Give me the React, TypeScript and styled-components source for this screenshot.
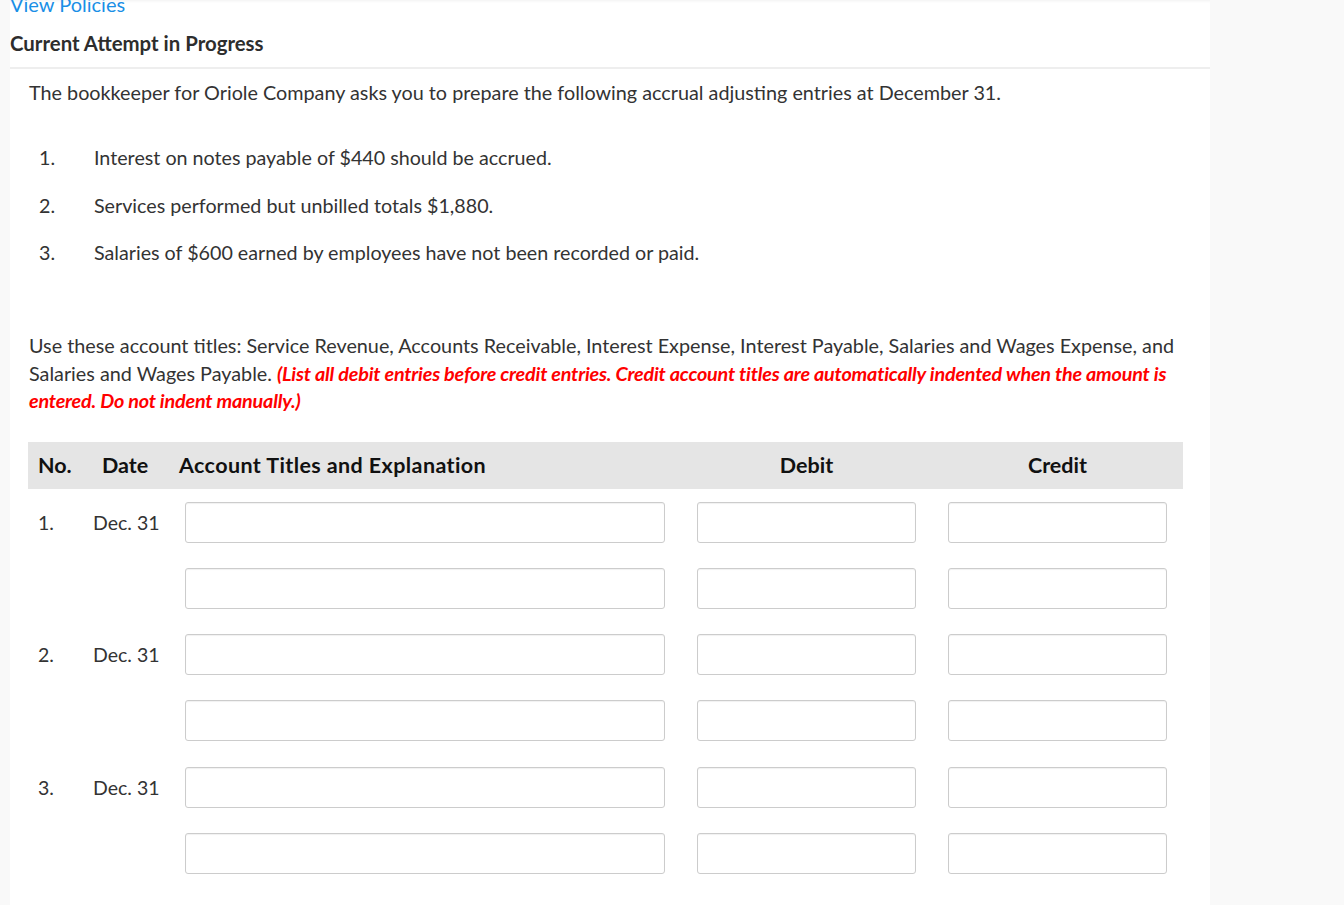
import styled, { createGlobalStyle } from "styled-components";

const GlobalStyle = createGlobalStyle`
  html, body {
    margin: 0;
    padding: 0;
    background: #f9f9f9;
    font-family: Lato, "Open Sans", Arial, sans-serif;
    color: #333;
  }
`;

const Panel = styled.div`
  width: 1200px;
  margin-left: 10px;
  min-height: 905px;
  background: #fff;
  box-shadow: inset 0 3px 3px -2px rgba(0, 0, 0, 0.06);
  overflow: hidden;
`;

const TopBar = styled.div`
  border-bottom: 2px solid #eeeeee;
`;

const PolicyLink = styled.a`
  display: block;
  margin-top: -8px;
  font-size: 20px;
  line-height: 24px;
  color: #1a8fe6;
  text-decoration: none;
`;

const AttemptTitle = styled.h2`
  margin: 15px 0 0;
  font-size: 20.4px;
  line-height: 24px;
  font-weight: 700;
  color: #2d2d2d;
  padding-bottom: 12px;
`;

const Content = styled.div`
  padding: 10px 0 0 19px;
  width: 1158px;
`;

const Para = styled.p`
  margin: 0;
  font-size: 19.8px;
  line-height: 27.5px;
  color: #333;
`;

const Warning = styled.span`
  color: #ff0000;
  font-weight: 700;
  font-style: italic;
  letter-spacing: -0.2px;
`;

const ItemList = styled.ol`
  list-style: none;
  margin: 37.5px 0 65.5px;
  padding: 0;
  display: flex;
  flex-direction: column;
  gap: 20px;
`;

const Item = styled.li`
  display: flex;
  font-size: 19.7px;
  line-height: 27.5px;
`;

const ItemNum = styled.span`
  width: 65px;
  padding-left: 10px;
  box-sizing: border-box;
  flex: none;
`;

const Journal = styled.div`
  width: 1155px;
  margin: 27px 0 0 -1px;
`;

const HeadRow = styled.div`
  display: flex;
  align-items: center;
  height: 47px;
  background: #e5e5e5;
  font-size: 21.5px;
  font-weight: 700;
  color: #111;
`;

const HeadCell = styled.div<{ $w: number; $pad?: number; $center?: boolean; $wide?: boolean }>`
  width: ${(p) => p.$w}px;
  padding-left: ${(p) => p.$pad ?? 0}px;
  box-sizing: border-box;
  text-align: ${(p) => (p.$center ? "center" : "left")};
  letter-spacing: ${(p) => (p.$wide ? "0.4px" : "0")};
  flex: none;
  white-space: nowrap;
`;

const Rows = styled.div`
  display: flex;
  flex-direction: column;
  gap: 25.3px;
  padding-top: 13px;
`;

const EntryRow = styled.div`
  display: flex;
  align-items: center;
  height: 41px;
`;

const Cell = styled.div<{ $w: number; $pad?: number }>`
  width: ${(p) => p.$w}px;
  padding-left: ${(p) => p.$pad ?? 0}px;
  box-sizing: border-box;
  font-size: 19.5px;
  color: #333;
  flex: none;
`;

const Field = styled.input<{ $w: number }>`
  width: ${(p) => p.$w}px;
  height: 41px;
  box-sizing: border-box;
  border: 1px solid #cccccc;
  border-radius: 3px;
  box-shadow: inset 0 1px 1px rgba(0, 0, 0, 0.06);
  background: #fff;
  flex: none;
  font-family: inherit;
  font-size: 16px;
  padding: 0 8px;
  &:focus {
    outline: none;
    border-color: #66afe9;
  }
`;

const Spacer = styled.div`
  width: 32px;
  flex: none;
`;

const items = [
  "Interest on notes payable of $440 should be accrued.",
  "Services performed but unbilled totals $1,880.",
  "Salaries of $600 earned by employees have not been recorded or paid.",
];

const entries = [
  { no: "1.", date: "Dec. 31" },
  { no: "", date: "" },
  { no: "2.", date: "Dec. 31" },
  { no: "", date: "" },
  { no: "3.", date: "Dec. 31" },
  { no: "", date: "" },
];

export default function App() {
  return (
    <>
      <GlobalStyle />
      <Panel>
        <TopBar>
          <PolicyLink href="#">View Policies</PolicyLink>
          <AttemptTitle>Current Attempt in Progress</AttemptTitle>
        </TopBar>
        <Content>
          <Para>
            The bookkeeper for Oriole Company asks you to prepare the following
            accrual adjusting entries at December 31.
          </Para>
          <ItemList>
            {items.map((t, i) => (
              <Item key={i}>
                <ItemNum>{i + 1}.</ItemNum>
                <span>{t}</span>
              </Item>
            ))}
          </ItemList>
          <Para>
            Use these account titles: Service Revenue, Accounts Receivable,
            Interest Expense, Interest Payable, Salaries and Wages Expense, and
            Salaries and Wages Payable.{" "}
            <Warning>
              (List all debit entries before credit entries. Credit account
              titles are automatically indented when the amount is entered. Do
              not indent manually.)
            </Warning>
          </Para>
          <Journal>
            <HeadRow>
              <HeadCell $w={65} $pad={10}>No.</HeadCell>
              <HeadCell $w={86} $pad={9}>Date</HeadCell>
              <HeadCell $w={518} $wide>Account Titles and Explanation</HeadCell>
              <HeadCell $w={219} $center>Debit</HeadCell>
              <HeadCell $w={32} />
              <HeadCell $w={219} $center>Credit</HeadCell>
            </HeadRow>
            <Rows>
              {entries.map((e, i) => (
                <EntryRow key={i}>
                  <Cell $w={65} $pad={10}>{e.no}</Cell>
                  <Cell $w={92}>{e.date}</Cell>
                  <Field $w={480} />
                  <Spacer />
                  <Field $w={219} />
                  <Spacer />
                  <Field $w={219} />
                </EntryRow>
              ))}
            </Rows>
          </Journal>
        </Content>
      </Panel>
    </>
  );
}
